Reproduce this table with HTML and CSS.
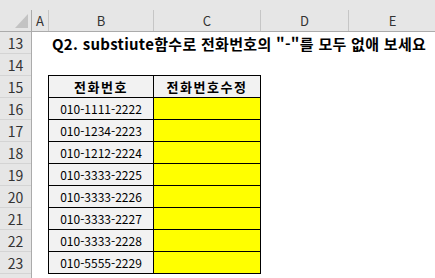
FILE: index.html
```html
<!DOCTYPE html>
<html lang="ko">
<head>
<meta charset="utf-8">
<title>Q2 substitute</title>
<link rel="stylesheet" href="styles.css">
</head>
<body>
<div class="sheet">
  <div class="topstrip"></div>
  <div class="colbar">
    <div class="corner">
      <svg width="31" height="21" viewBox="0 0 31 21"><polygon points="15,18 28,18 28,4" fill="#c3c3c3"/></svg>
    </div>
    <div class="colhead col-a">A</div>
    <div class="colhead col-b">B</div>
    <div class="colhead col-c">C</div>
    <div class="colhead col-d">D</div>
    <div class="colhead col-e">E</div>
  </div>
  <div class="body">
    <div class="rowheads">
      <div class="rowhead">13</div>
      <div class="rowhead">14</div>
      <div class="rowhead">15</div>
      <div class="rowhead">16</div>
      <div class="rowhead">17</div>
      <div class="rowhead">18</div>
      <div class="rowhead">19</div>
      <div class="rowhead">20</div>
      <div class="rowhead">21</div>
      <div class="rowhead">22</div>
      <div class="rowhead">23</div>
      <div class="rowhead"></div>
    </div>
    <div class="cells">
      <div class="title">Q2. substiute함수로 전화번호의 "-"를 모두 없애 보세요</div>
      <div class="spacer"></div>
      <div class="table">
        <div class="cell head">전화번호</div>
        <div class="cell head">전화번호수정</div>
        <div class="cell num">010-1111-2222</div><div class="cell fill"></div>
        <div class="cell num">010-1234-2223</div><div class="cell fill"></div>
        <div class="cell num">010-1212-2224</div><div class="cell fill"></div>
        <div class="cell num">010-3333-2225</div><div class="cell fill"></div>
        <div class="cell num">010-3333-2226</div><div class="cell fill"></div>
        <div class="cell num">010-3333-2227</div><div class="cell fill"></div>
        <div class="cell num">010-3333-2228</div><div class="cell fill"></div>
        <div class="cell num">010-5555-2229</div><div class="cell fill"></div>
      </div>
    </div>
  </div>
</div>
</body>
</html>
```

FILE: styles.css
```css
html, body {
  margin: 0;
  padding: 0;
  background: #ffffff;
}

.sheet {
  width: 435px;
  height: 278px;
  overflow: hidden;
  font-family: "Noto Sans CJK KR", "Noto Sans", sans-serif;
  color: #000;
}

.topstrip {
  height: 10px;
  background: #e6e6e6;
}

/* column letters */
.colbar {
  display: flex;
  height: 22px;
  box-sizing: border-box;
  background: #e6e6e6;
  border-bottom: 1px solid #ababab;
}

.corner {
  width: 32px;
  flex: none;
  box-sizing: border-box;
  border-right: 1px solid #ababab;
  display: flex;
}

.colhead {
  flex: none;
  box-sizing: border-box;
  border-right: 1px solid #c6c6c6;
  display: flex;
  align-items: center;
  justify-content: center;
  font-size: 13px;
  color: #333;
  line-height: 1;
}

.col-a { width: 17px; }
.col-b { width: 105px; }
.col-c { width: 107px; }
.col-d { width: 88px; }
.col-e { width: 88px; }

.body {
  display: flex;
}

/* row numbers */
.rowheads {
  width: 32px;
  flex: none;
  box-sizing: border-box;
  background: #e6e6e6;
  border-right: 1px solid #ababab;
}

.rowhead {
  height: 22px;
  box-sizing: border-box;
  border-bottom: 1px solid #d4d4d4;
  display: flex;
  align-items: center;
  justify-content: center;
  font-size: 14px;
  color: #333;
  line-height: 1;
}

.cells {
  flex: 1;
}

.title {
  height: 22px;
  padding-left: 20px;
  display: flex;
  align-items: center;
  font-size: 15px;
  font-weight: bold;
  letter-spacing: 0.3px;
  white-space: nowrap;
  line-height: 1;
}

.spacer {
  height: 21px;
}

.table {
  margin-left: 16px;
  width: 213px;
  display: grid;
  grid-template-columns: 105px 107px;
  border-top: 1px solid #000;
  border-left: 1px solid #000;
  box-sizing: border-box;
}

.cell {
  height: 22px;
  box-sizing: border-box;
  border-right: 1px solid #000;
  border-bottom: 1px solid #000;
  display: flex;
  align-items: center;
  justify-content: center;
  line-height: 1;
}

.head {
  background: #f2f2f2;
  font-weight: bold;
  font-size: 13px;
  letter-spacing: 1.5px;
}

.num {
  background: #f2f2f2;
  font-size: 12px;
}

.fill {
  background: #ffff00;
}
```
